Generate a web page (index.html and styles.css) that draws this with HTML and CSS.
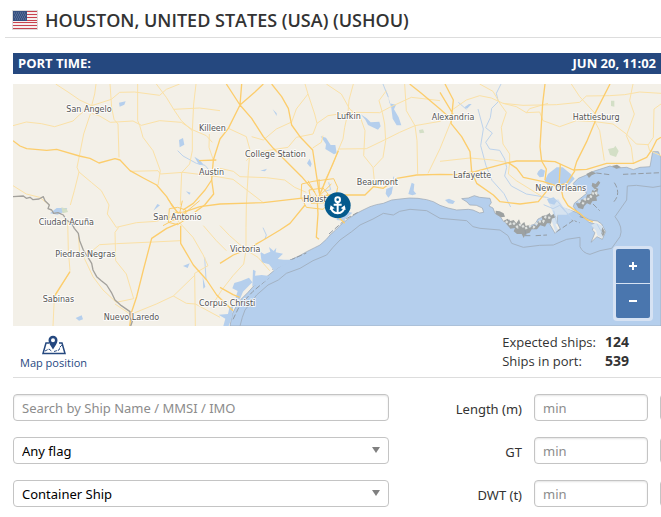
FILE: index.html
```html
<!DOCTYPE html>
<html lang="en">
<head>
    <meta charset="UTF-8">
    <meta name="viewport" content="width=device-width, initial-scale=1.0">
    <title>Port of Houston</title>
    <link rel="stylesheet" href="styles.css">
</head>
<body>
    <header class="port-title">
        <svg class="flag" viewBox="0 0 26 20" aria-hidden="true">
            <rect width="26" height="20" fill="#dcdcdc"/>
            <rect x="1" y="1" width="24" height="18" fill="#f6efef"/>
            <path d="M1 1.5h24M1 4.5h24M1 7.5h24M1 10.5h24M1 12.5h24M1 15.5h24M1 18.5h24" stroke="#c8434f" stroke-width="1.2"/>
            <rect x="1" y="1" width="14" height="10" fill="#36507f"/>
            <path d="M2 3h12M3 5h12M2 7h12M3 9h12" stroke="#7085aa" stroke-width="1" stroke-dasharray="1 1"/>
        </svg>
        <h1>HOUSTON, UNITED STATES (USA) (USHOU)</h1>
    </header>

    <main class="content">
        <div class="port-time">
            <span>PORT TIME:</span>
            <span>JUN 20, 11:02</span>
        </div>

        <div class="map">
            <svg class="map-canvas" viewBox="0 0 1944 726" role="img" aria-label="Map of the Gulf coast">
                <rect class="land" width="1944" height="726"/>

                <!-- sea -->
                <path class="water coast" d="M651 726L658 690L668 670L685 645L705 625L722 606L745 590L765 575L784 559L810 541L836 526L860 515L881 503L905 491L921 483L940 466L951 453L968 438L986 420L1005 405L1031 388L1050 378L1071 368L1090 362L1111 358L1136 348L1161 345L1190 342L1215 343L1241 347L1261 353L1281 364L1305 372L1331 378L1366 376L1380 378L1400 387L1412 385L1408 372L1390 364L1370 363L1362 354L1346 344L1366 342L1384 335L1400 340L1431 343L1435 356L1428 366L1440 372L1446 388L1462 398L1472 413L1490 408L1490 422L1511 433L1530 425L1537 439L1551 425L1566 420L1575 405L1590 398L1611 390L1616 404L1611 422L1626 448L1641 433L1632 415L1634 390L1660 375L1690 385L1715 402L1728 415L1746 420L1738 438L1746 446L1734 475L1752 458L1768 466L1778 443L1766 420L1753 411L1731 408L1701 393L1681 368L1684 358L1700 345L1721 328L1705 309L1686 310L1681 298L1696 283L1718 274L1741 262L1760 256L1791 246L1810 252L1841 250L1861 257L1881 250L1911 248L1915 225L1919 203L1936 203L1944 222V726Z"/>

                <!-- barrier islands and marshes -->
                <path class="wetland" d="M1606 352l30 -6l14 22l30 14l-20 10l-26 0l-6 30l8 16l-8 8l-12 -36l4 -24zM1735 424l14 -8l20 10l6 18l-8 18l-14 -8l-4 -14z"/>
                <path class="marsh" d="M1448 380l12 2l12 6l4 10l-12 2l-16 -10zM1472 410l12 -6l6 8l12 -4l8 10l8 -12l6 16l10 -8l4 12l12 -4l-2 10l16 -10l8 4l2 -14l14 -4l-2 -12l16 -2l8 -8l2 10l10 -6l8 10l-14 4l-2 14l-12 0l-6 10l-14 -4l-10 12l-16 0l-6 10l-12 4l-6 12l-6 -12l-14 0l-10 -8l4 -10l-14 2l-10 -12zM1688 358l12 0l6 -12l12 2l4 -16l12 -2l4 -12l8 4l-2 -12l12 4l-4 14l8 6l-10 6l2 10l-14 2l-6 10l-10 -4l-8 8l-4 10l-14 -4zM1738 296l10 4l8 -10l6 6l-8 12l-10 6l-8 -8zM1768 430l8 14l-6 14l-6 -12zM1720 270l16 -8l14 6l-14 6l-8 8zM1796 246l16 -4l12 8l-14 4z"/>
                <path class="marsh-gaps" d="M1478 412l12 8l10 -4l14 14l10 -10l12 14l14 -8l12 4l14 -18l14 2l8 -16l14 4M1696 350l14 8l8 -16l12 4l8 -18l12 2l-4 -14"/>
                <path class="shoal-thin" d="M660 706L680 665L720 622L770 580M778 556L840 526M948 450L1000 404L1040 382"/>
                <path class="shoal-thin" d="M1536 438l4 22M1536 455h20M1568 455l34 -2M1630 444l50 -34M1676 408l24 8M1750 267L1790 272M1830 271L1944 266M1804 296q22 34 -4 60M1740 360l20 20M1700 398l20 5M790 549l25 -16l20 -6l45 -20"/>

                <!-- bays, lakes and rivers -->
                <path class="water" d="M742 503l12 8l18 -8l-4 -14l14 12l8 -10l-2 14l22 4l-16 16l18 2l30 0l-16 10l-30 14l-12 10l-16 -20l-22 -6zM720 557l8 4l-2 14l20 -2l30 4l-30 22l-28 8zM664 597l20 -6l24 -10l10 14l-28 28l-10 24l-12 -6l6 -20l-16 -8zM645 690l4 -18l12 -8l-4 36l-10 26l-16 0l6 -22l-20 -12zM970 408l18 -24l-2 -18l14 12l14 -6l-8 12l12 2l-26 24zM1120 315l20 -8l-4 22l-10 12l-8 -12zM1186 330l10 -34l8 4l-2 20l8 10l-12 4zM1595 290l10 -20l26 -20l18 0l24 20l12 14l-18 20l-30 6l-34 -8zM1576 262l8 -8l12 6l-4 18l-12 2l-8 -10zM1602 346l20 -6l10 10l-8 12l-16 -4zM1296 348l12 -4l18 8l-6 8l-14 -2z"/>
                <path class="water" d="M923 157l16 4l14 22l14 0l4 24l-8 4l-26 -16l2 -14zM1043 91l18 12l12 12l26 -2l4 14l-8 10l-30 -14l-8 -16zM1111 6l14 26l4 26l20 4l-6 14l14 24l8 24l-14 0l-12 -20l-4 -32l-8 -30zM318 56l20 -4l-4 10l-14 6zM882 238l8 -14l6 16l-4 10zM498 168l12 -6l4 20l-14 8zM544 218l16 10l12 14l-14 0zM510 546l20 -8l-6 14zM569 578l8 30l-6 6zM188 702l18 -8l4 12l-12 4zM111 388l20 -16l32 0l-10 12l-20 8zM779 76l12 12v8zM742 260l20 -6l-6 8zM519 322l14 4l-4 6zM1354 70l14 -10l8 0l-14 14zM421 380l12 -20l8 4z"/>
                <path class="river" d="M1464 0l-14 28l6 25l-20 20l-4 28l-14 30l20 16l-20 28l12 20l30 4l15 26l6 25l-6 26l20 30l45 24l60 10l34 12l24 30l30 34M1336 55L1360 76M1110 0l16 40M1140 300l2 -22M935 322l18 -5l-6 -22M1395 75l16 60l-8 50l16 60l18 44l36 40l20 40M575 520l4 66M494 200l16 16l40 22l26 6l15 18M1592 362l28 12l20 -10l18 20l20 20M1622 380l10 40M1752 420l16 28M756 465l4 -12l-10 -22M985 405l22 -24"/>
                <path class="park" d="M1785 195l18 -4l4 -6l10 16l-8 18l-18 -6zM1794 50l10 0l0 18l-10 -2zM1218 138l12 -2l4 10l-14 2zM145 370l16 4l4 10l-16 4z"/>

                <!-- minor roads -->
                <path class="road-minor" d="M0 125L40 114L85 119L125 128L180 111L200 92L236 65M128 0L165 24L200 48L236 65L295 46L320 25L365 24L440 34L460 16L500 0M249 0L245 30L236 65M291 0L296 70L303 106L315 120L318 220M236 88L260 96L292 115L360 111L385 124L440 110L505 115L540 138L580 155L598 175M374 0L374 110L380 124L390 160L420 200L442 260L435 303M232 90L212 150L199 216L192 250L198 264L184 320L172 363M198 264L235 295L265 320L288 363L283 390L310 430L370 416L430 412L485 395M317 430L306 445L308 530L340 570L362 644M351 262L435 260L442 270L510 265L600 276M430 0L460 40L482 76L505 110L538 140L538 200L530 240L506 266L502 363M482 76L560 72L621 80M549 0L542 60L538 140M589 150L588 190L601 228M0 305L40 330L80 340L109 363M196 448L200 510L214 520L260 482L310 479L420 474L503 470M164 410L166 500L171 560M214 523L240 578L270 618L310 655L362 644M306 660L351 690M120 726L124 640L171 563M485 400L540 460L570 512L585 545L545 568L547 726M361 688L430 660L481 636L546 573M481 636L520 658L547 660L621 700M571 425L610 470L640 500M600 276L660 286L751 356M621 253L661 262L681 278L760 281L815 288L845 310L880 325"/>
                <path class="road-minor" d="M646 133L700 158L711 198L706 260L700 363L699 430L699 498L692 540L660 575L625 620L600 660M699 498L735 520L770 560M621 425L650 455L699 498M716 158L751 168L790 135L836 114L850 75L885 30L876 0M885 30L905 90L912 118L900 150L850 160L825 190L760 200L720 210L700 230M1021 0L1008 48L1005 85L995 130L990 165L976 198L960 240L938 285L925 325M912 118L945 95L1010 85L1100 86L1130 70L1195 40L1240 45L1281 50M940 0L985 30L1010 75L1042 100L1056 140L1052 215L1080 250L1085 300M1120 20L1098 50L1108 85L1115 120L1118 170L1110 220L1082 250M899 192L925 175L930 155M976 195L1060 194L1110 170L1160 145L1206 125L1281 112L1315 90M1206 125L1212 170L1214 270M1175 0L1180 80L1206 125M1281 194L1315 110M1245 268L1281 194M1281 232L1371 222L1440 228L1486 236M1317 78L1360 48L1400 35L1435 42L1470 58L1530 64L1630 62L1700 55L1720 36L1790 35L1835 32L1880 24L1944 28M1400 0L1440 22L1462 60L1480 85L1465 130L1470 180L1490 210L1490 236M1470 58L1510 68L1540 86L1580 84L1590 110L1640 128L1690 110L1746 113M1540 86L1550 74L1605 58M1675 0L1700 38L1746 88M1746 113L1800 120L1840 150L1870 180L1905 182M1746 113L1760 140L1774 230M1860 0L1850 50L1864 90L1840 155L1855 190L1861 238M1944 60L1923 75L1921 160L1905 183L1910 200L1944 215M1490 236L1486 270L1510 290L1591 340"/>

                <!-- main roads -->
                <path class="road" d="M0 170L21 186L41 194L101 199L131 196L199 216L231 223L258 237L306 224L321 228L351 260L391 282L431 303L461 338L476 363L496 388M510 378L541 358L576 318L596 288L601 228L621 165L646 133L681 63L686 0M681 63L725 25L751 0M640 0L681 63M776 0L806 38L826 73L836 123L861 158L899 198L911 278L919 328M681 63L716 103L751 158L781 193L821 233L866 278L906 325M501 388L561 368L621 360L751 356L861 343L911 338L951 333L1056 333L1081 308L1111 313L1151 283L1211 273L1281 271L1330 272L1386 263L1486 236L1511 231L1591 231L1626 233L1681 258L1721 256L1781 238L1861 238L1901 220L1916 198L1931 168L1944 160"/>
                <path class="road" d="M1486 236L1511 253L1531 280L1591 293L1631 306L1661 298L1686 260M1596 0L1589 58L1581 188L1586 231L1600 255L1596 288M1791 0L1746 88L1746 113L1721 173L1691 233L1683 260M1296 0L1321 48L1314 118L1346 158L1371 203L1376 263L1391 298L1441 333L1461 353L1521 360L1576 353L1610 310M1644 312L1650 340L1665 365L1700 388L1720 406L1740 414M1281 25L1320 90M1190 0L1225 28L1281 75L1314 105M496 418L461 433L416 463L391 558L371 638L356 683M503 425L503 478L541 543L581 588L611 633L660 680M171 563L125 635M921 330L976 200M876 363L831 418L801 438L751 468L699 498L661 513L621 538M912 338L915 390L910 460L918 466M930 345L975 398L995 418M596 288L602 330L575 363L545 385M558 230L610 228M621 610L660 632L680 640M1638 305L1642 240M356 683L350 726"/>
                <path class="road ring" d="M866 300L900 292L962 284L974 310L968 340L930 376L880 370L864 340ZM888 318L930 312L945 330L935 356L895 358ZM469 374L494 370L518 378L520 405L494 422L466 415ZM482 385H510V408H482ZM496 388L465 345M500 388L508 350M500 400L560 350M496 400L450 425M912 338L885 290M920 340L918 285M920 335L955 300"/>

                <!-- border and territorial waters -->
                <path class="border" d="M0 338L31 336L40 343L51 340L60 347L78 345L91 338L96 350L109 363L105 374L116 378L122 388L135 386L151 393L160 408L176 418L184 433L196 448L200 470L211 498L225 520L236 538L240 558L251 578L265 590L281 603L295 625L306 648L325 665L351 683L350 700L358 712L353 726"/>
                <path class="offshore" d="M681 726L688 700L696 678L731 633L765 603L796 588L820 568L861 553L900 530L941 513L960 490L981 468L1016 443L1041 423L1080 405L1111 388L1141 393L1160 382L1191 376L1241 380L1281 403L1361 410L1380 428L1401 433L1461 438L1485 455L1496 478L1531 490L1580 484L1621 483L1661 466L1701 460L1701 488Q1710 508 1731 511L1761 500L1796 493L1821 458Q1832 430 1806 398L1841 348L1843 306L1870 304L1920 310L1944 306"/>

                <g class="places">
                    <text x="160" y="85">San Angelo</text>
                    <text x="558" y="141">Killeen</text>
                    <text x="558" y="274">Austin</text>
                    <text x="971" y="105">Lufkin</text>
                    <text x="696" y="219">College Station</text>
                    <text x="871" y="354">Houston</text>
                    <text x="1031" y="303">Beaumont</text>
                    <text x="1256" y="109">Alexandria</text>
                    <text x="1321" y="281">Lafayette</text>
                    <text x="1679" y="107">Hattiesburg</text>
                    <text x="1567" y="320">New Orleans</text>
                    <text x="77" y="423">Ciudad Acuña</text>
                    <text x="127" y="520">Piedras Negras</text>
                    <text x="89" y="653">Sabinas</text>
                    <text x="272" y="708">Nuevo Laredo</text>
                    <text x="421" y="407">San Antonio</text>
                    <text x="558" y="666">Corpus Christi</text>
                    <text x="651" y="505">Victoria</text>
                </g>

                <!-- port marker -->
                <g class="marker">
                    <circle cx="974" cy="364" r="39"/>
                    <circle class="anchor" cx="974" cy="347" r="7"/>
                    <path class="anchor" d="M974 354V388M962 362H986M954 370Q956 386 974 388Q992 386 994 370"/>
                    <path class="anchor-tip" d="M950 378L953 364L965 373ZM998 378L995 364L983 373Z"/>
                </g>
            </svg>
            <div class="zoom">
                <button type="button" aria-label="Zoom in">
                    <svg viewBox="0 0 8 8"><path d="M0 4H8M4 0V8"/></svg>
                </button>
                <button type="button" aria-label="Zoom out">
                    <svg viewBox="0 0 8 8"><path d="M0 4H8"/></svg>
                </button>
            </div>
        </div>

        <div class="summary">
            <a class="map-position" href="#">
                <svg viewBox="0 0 24 20" aria-hidden="true">
                    <path class="sheet" d="M7 8H4L1 18.500H23L20 8H17"/>
                    <path class="route" d="M3 16L7 14L10 16.500M12 16.500L17 15L18 12L20 10"/>
                    <path class="pin" fill-rule="evenodd" d="M11 14.500C9 11 6.500 8.500 6.500 5.200A4.500 4.500 0 0 1 15.500 5.200C15.500 8.500 13 11 11 14.500ZM11 3.200A2 2 0 1 0 11 7.200A2 2 0 1 0 11 3.200Z"/>
                </svg>
                Map position
            </a>
            <dl class="stats">
                <dt>Expected ships:</dt>
                <dd>124</dd>
                <dt>Ships in port:</dt>
                <dd>539</dd>
            </dl>
        </div>

        <form class="filters">
            <input type="text" aria-label="Search ships" placeholder="Search by Ship Name / MMSI / IMO">
            <label for="length-min">Length (m)</label>
            <input type="text" id="length-min" class="range" placeholder="min">
            <input type="text" class="range" aria-label="Length max" placeholder="max">

            <div class="select-box">
                <select aria-label="Flag">
                    <option>Any flag</option>
                </select>
            </div>
            <label for="gt-min">GT</label>
            <input type="text" id="gt-min" class="range" placeholder="min">
            <input type="text" class="range" aria-label="GT max" placeholder="max">

            <div class="select-box">
                <select aria-label="Ship type">
                    <option>Container Ship</option>
                </select>
            </div>
            <label for="dwt-min">DWT (t)</label>
            <input type="text" id="dwt-min" class="range" placeholder="min">
            <input type="text" class="range" aria-label="DWT max" placeholder="max">
        </form>
    </main>
</body>
</html>
```

FILE: styles.css
```css
* {
    box-sizing: border-box;
}

body {
    margin: 0;
    background: #fff;
    color: #333;
    font-family: 'Open Sans', 'Noto Sans', sans-serif;
    font-size: 13px;
    overflow-x: hidden;
}

.port-title {
    display: flex;
    align-items: center;
    gap: 7px;
    height: 38px;
    margin-left: 5px;
    padding: 2px 0 0 7px;
    border-bottom: 1px solid #ddd;
}

.flag {
    width: 26px;
    height: 20px;
}

.port-title h1 {
    margin: 0;
    font-size: 18px;
    font-weight: 600;
}

.content {
    margin: 15px 0 0 13px;
}

.port-time {
    display: flex;
    justify-content: space-between;
    height: 21px;
    padding: 0 5px;
    background: #25487f;
    color: #fff;
    font-weight: 700;
    line-height: 20px;
}

/* Map */
.map {
    position: relative;
    margin-top: 10px;
}

.map-canvas {
    display: block;
    width: 100%;
}

.map-canvas path {
    fill: none;
    stroke-linejoin: round;
}

.land {
    fill: #f3f0e8;
}

.map-canvas .water {
    fill: #b5cfed;
}

.coast {
    stroke: #9aa5b0;
    stroke-width: 2;
}

.river {
    stroke: #bdd3ec;
    stroke-width: 3;
}

.map-canvas .park {
    fill: #d3dfc6;
}

.map-canvas .wetland {
    fill: #d6e3f0;
}

.map-canvas .marsh {
    fill: #9da1a1;
}

.marsh-gaps {
    stroke: #dfe2e0;
    stroke-width: 7;
    stroke-dasharray: 7 6;
}

.shoal-thin {
    stroke: #939ba3;
    stroke-width: 3;
    stroke-dasharray: 16 7;
}

.road-minor {
    stroke: #fbe1a6;
    stroke-width: 3;
}

.road {
    stroke: #fccd6c;
    stroke-width: 4;
}

.road.ring {
    stroke-width: 3;
}

.border {
    stroke: #a3a19c;
    stroke-width: 4;
}

.offshore {
    stroke: #a3b2c3;
    stroke-width: 3;
}

.places text {
    font-family: 'DejaVu Sans', sans-serif;
    font-size: 24px;
    fill: #555;
    stroke: #fff;
    stroke-width: 6px;
    stroke-linejoin: round;
    stroke-opacity: 0.8;
    paint-order: stroke;
}

.marker circle {
    fill: #045a8d;
}

.marker .anchor {
    fill: none;
    stroke: #fff;
    stroke-width: 6;
}

.marker .anchor-tip {
    fill: #fff;
}

.zoom {
    position: absolute;
    right: 8px;
    bottom: 5px;
    display: flex;
    flex-direction: column;
    gap: 1px;
    padding: 3px;
    border-radius: 4px;
    background: #d6e2f3;
}

.zoom button {
    display: flex;
    align-items: center;
    justify-content: center;
    width: 34px;
    height: 34px;
    padding: 0;
    border: 0;
    background: #4a76ae;
}

.zoom button:first-child {
    border-radius: 2px 2px 0 0;
}

.zoom button:last-child {
    border-radius: 0 0 2px 2px;
}

.zoom svg {
    width: 8px;
    height: 8px;
}

.zoom path {
    stroke: #fff;
    stroke-width: 2;
}

/* Summary */
.summary {
    display: flex;
    justify-content: space-between;
    padding: 7px 32px 6px 7px;
    border-bottom: 1px solid #ddd;
}

.map-position {
    display: flex;
    flex-direction: column;
    align-items: center;
    color: #25487f;
    font-size: 11px;
    line-height: 16px;
    text-decoration: none;
}

.map-position svg {
    width: 24px;
    height: 20px;
    margin-top: 2px;
}

.sheet {
    fill: none;
    stroke: #25487f;
    stroke-width: 1.5;
}

.route {
    fill: none;
    stroke: #25487f;
    stroke-dasharray: 3 1;
}

.map-position .pin {
    fill: #25487f;
}

.stats {
    display: grid;
    grid-template-columns: auto auto;
    column-gap: 9px;
    margin: 0;
    line-height: 18px;
}

.stats dd {
    margin: 0;
    font-size: 14px;
    font-weight: 700;
}

/* Filters, the max column runs past the right edge */
.filters {
    display: grid;
    grid-template-columns: 58% 1fr 114px 1px;
    gap: 16px 12px;
    align-items: center;
    padding: 16px 0;
    overflow: hidden;
    font-family: 'Noto Sans', sans-serif;
}

.filters label {
    padding-top: 3px;
    text-align: right;
}

.filters input,
.filters select {
    width: 100%;
    height: 27px;
    padding: 0 8px;
    border: 1px solid #c4c4c4;
    border-radius: 4px;
    background: #fff;
    color: #000;
    font-family: inherit;
    font-size: 13px;
}

.filters input {
    box-shadow: inset 0 1px 2px #e4e4e4;
}

.filters .range {
    width: 114px;
}

.filters input::placeholder {
    color: #8c8c8c;
}

.select-box {
    position: relative;
}

.filters select {
    display: block;
    appearance: none;
}

.select-box::after {
    content: '';
    position: absolute;
    top: 10px;
    right: 9px;
    border-top: 6px solid #808080;
    border-left: 4px solid transparent;
    border-right: 4px solid transparent;
    pointer-events: none;
}
```
